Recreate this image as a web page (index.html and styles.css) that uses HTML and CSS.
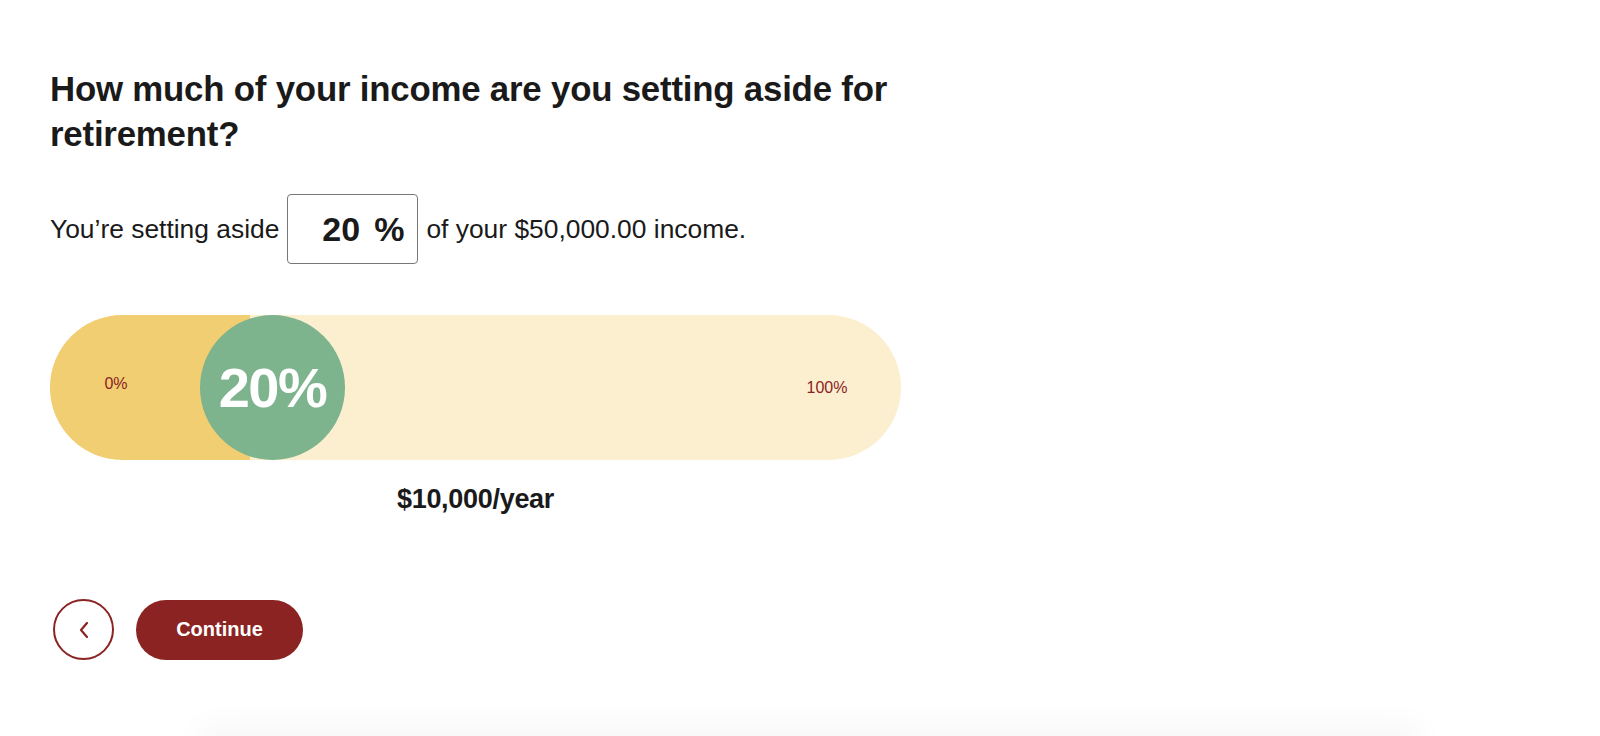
FILE: index.html
```html
<!DOCTYPE html>
<html lang="en">
<head>
<meta charset="utf-8">
<title>Retirement savings</title>
<link rel="stylesheet" href="styles.css">
</head>
<body>
<main class="page">
  <h1 class="title">How much of your income are you setting aside for retirement?</h1>
  <div class="sentence">
    <span>You’re setting aside</span>
    <div class="pct-input"><span class="pct-num">20</span><span class="pct-sign">%</span></div>
    <span>of your $50,000.00 income.</span>
  </div>
  <div class="slider">
    <div class="track">
      <div class="fill"></div>
      <span class="label label-min">0%</span>
      <span class="label label-max">100%</span>
      <div class="thumb">20%</div>
    </div>
    <div class="amount">$10,000/year</div>
  </div>
  <div class="actions">
    <button class="back" aria-label="Back">
      <svg width="14" height="20" viewBox="0 0 14 20"><path d="M10 3 L4 10 L10 17" fill="none" stroke="#8b2323" stroke-width="2.2" stroke-linecap="round" stroke-linejoin="round"/></svg>
    </button>
    <button class="continue">Continue</button>
  </div>
</main>
<div class="footer-shadow"></div>
</body>
</html>
```
FILE: styles.css
```css
html, body {
  margin: 0;
  padding: 0;
  background: #fff;
}
body {
  font-family: "Liberation Sans", Arial, sans-serif;
  color: #1a1a1a;
  overflow: hidden;
  height: 736px;
}
.page {
  padding: 66px 0 0 50px;
  width: 852px;
}
.title {
  margin: 0;
  font-size: 34.8px;
  line-height: 45px;
  font-weight: 700;
  letter-spacing: -0.2px;
  width: 900px;
}
.sentence {
  margin-top: 38px;
  display: flex;
  align-items: center;
  gap: 8px;
  font-size: 26.4px;
  white-space: nowrap;
}
.pct-input {
  border: 1px solid #777;
  border-radius: 4px;
  display: flex;
  align-items: center;
  justify-content: flex-end;
  gap: 14px;
  padding-right: 13px;
  box-sizing: border-box;
  width: 131px;
  height: 70px;
  font-size: 34px;
  font-weight: 700;
  flex-shrink: 0;
}
.slider {
  margin-top: 51px;
  width: 851px;
}
.track {
  position: relative;
  height: 145px;
  border-radius: 73px;
  background: #fcefd0;
}
.fill {
  position: absolute;
  left: 0;
  top: 0;
  bottom: 0;
  width: 200px;
  background: #f2ce72;
  border-radius: 73px 0 0 73px;
}
.label {
  position: absolute;
  top: 50%;
  transform: translate(-50%, -50%);
  font-size: 16px;
  color: #8b2323;
}
.label-min {
  left: 66px;
  margin-top: -4px;
}
.label-max {
  left: 777px;
}
.thumb {
  position: absolute;
  left: 150px;
  top: 0;
  width: 145px;
  height: 145px;
  border-radius: 50%;
  background: #7db48d;
  color: #fff;
  font-size: 56px;
  font-weight: 700;
  display: flex;
  align-items: center;
  justify-content: center;
  letter-spacing: -1.5px;
}
.amount {
  text-align: center;
  font-size: 27px;
  font-weight: 700;
  margin-top: 24px;
  letter-spacing: -0.3px;
}
.actions {
  margin-top: 84px;
  display: flex;
  align-items: center;
  gap: 22px;
  padding-left: 3px;
}
.back {
  width: 61px;
  height: 61px;
  border-radius: 50%;
  border: 2px solid #8b2323;
  background: #fff;
  display: flex;
  align-items: center;
  justify-content: center;
  padding: 0;
  cursor: pointer;
}
.continue {
  width: 167px;
  height: 60px;
  border-radius: 30px;
  border: none;
  background: #8b2323;
  color: #fff;
  font-family: "Liberation Sans", Arial, sans-serif;
  font-size: 20px;
  font-weight: 700;
  cursor: pointer;
}
.footer-shadow {
  position: fixed;
  left: 200px;
  width: 1220px;
  top: 736px;
  height: 40px;
  box-shadow: 0 -12px 30px rgba(0, 0, 0, 0.035);
}
```
